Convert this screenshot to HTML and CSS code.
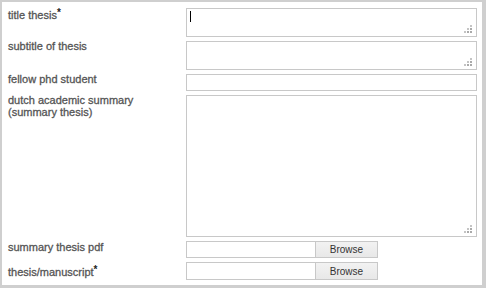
FILE: index.html
```html
<!DOCTYPE html>
<html>
<head>
<meta charset="utf-8">
<link rel="stylesheet" href="styles.css">
</head>
<body>
<div class="panel">
  <form class="form">
    <label class="lbl lbl-first">title thesis<span class="req">*</span></label>
    <div class="field grip h29"><textarea class="ta"></textarea><span class="caret"></span></div>

    <label class="lbl">subtitle of thesis</label>
    <div class="field grip h29"><textarea class="ta"></textarea></div>

    <label class="lbl">fellow phd student</label>
    <div class="field h17"><input class="txt" type="text"></div>

    <label class="lbl">dutch academic summary<br>(summary thesis)</label>
    <div class="field grip h142"><textarea class="ta"></textarea></div>

    <label class="lbl lbl-pdf">summary thesis pdf</label>
    <div class="field file h17"><span class="fname"></span><span class="browse">Browse</span></div>

    <label class="lbl lbl-last">thesis/manuscript<span class="req">*</span></label>
    <div class="field file h18"><span class="fname"></span><span class="browse">Browse</span></div>
  </form>
</div>
</body>
</html>
```
FILE: styles.css
```css
html, body {
  margin: 0;
  padding: 0;
}
body {
  width: 486px;
  height: 288px;
  background: #cfcfcf;
  overflow: hidden;
  font-family: "Liberation Sans", Arial, sans-serif;
}
.panel {
  margin: 2px 4px 0 2px;
  height: 283px;
  background: #fff;
  box-sizing: border-box;
  padding: 6px 5px 0 6px;
}
.form {
  display: grid;
  grid-template-columns: 178px 291px;
  row-gap: 4px;
  margin: 0;
}
.lbl {
  font-size: 11px;
  line-height: 12px;
  color: #555;
  margin-top: -1px;
  -webkit-text-stroke: 0.3px #555;
}
.lbl-first { margin-top: 1px; }
.lbl-pdf { margin-top: 0; }
.lbl-last { margin-top: 4px; }
.req {
  color: #222;
  font-size: 10px;
  font-weight: bold;
  line-height: 0;
  vertical-align: 3px;
  -webkit-text-stroke: 0;
}
.field {
  position: relative;
  box-sizing: border-box;
}
.h29 { height: 29px; }
.h17 { height: 17px; }
.h18 { height: 18px; }
.h142 { height: 142px; }
.ta, .txt {
  display: block;
  width: 100%;
  height: 100%;
  box-sizing: border-box;
  border: 1px solid #c8c8c8;
  background: #fff;
  margin: 0;
  padding: 0;
  resize: none;
  outline: none;
  font: 11px "Liberation Sans", Arial, sans-serif;
}
.grip::after {
  content: "";
  position: absolute;
  right: 5px;
  bottom: 4px;
  width: 2px;
  height: 2px;
  background: #aaa;
  box-shadow:
    -3px 0 #aaa, -6px 0 #c4c4c4,
    0 -3px #aaa, -3px -3px #c4c4c4,
    0 -6px #c4c4c4;
}
.caret {
  position: absolute;
  left: 4px;
  top: 3px;
  width: 1px;
  height: 11px;
  background: #000;
}
.file {
  display: flex;
  width: 192px;
}
.fname {
  width: 129px;
  box-sizing: border-box;
  border: 1px solid #c8c8c8;
  border-right: none;
  background: #fff;
}
.browse {
  flex: 1;
  box-sizing: border-box;
  border: 1px solid #c8c8c8;
  background: linear-gradient(#f2f2f2, #e8e8e8);
  font-size: 10px;
  color: #333;
  display: flex;
  align-items: center;
  justify-content: center;
}
```
